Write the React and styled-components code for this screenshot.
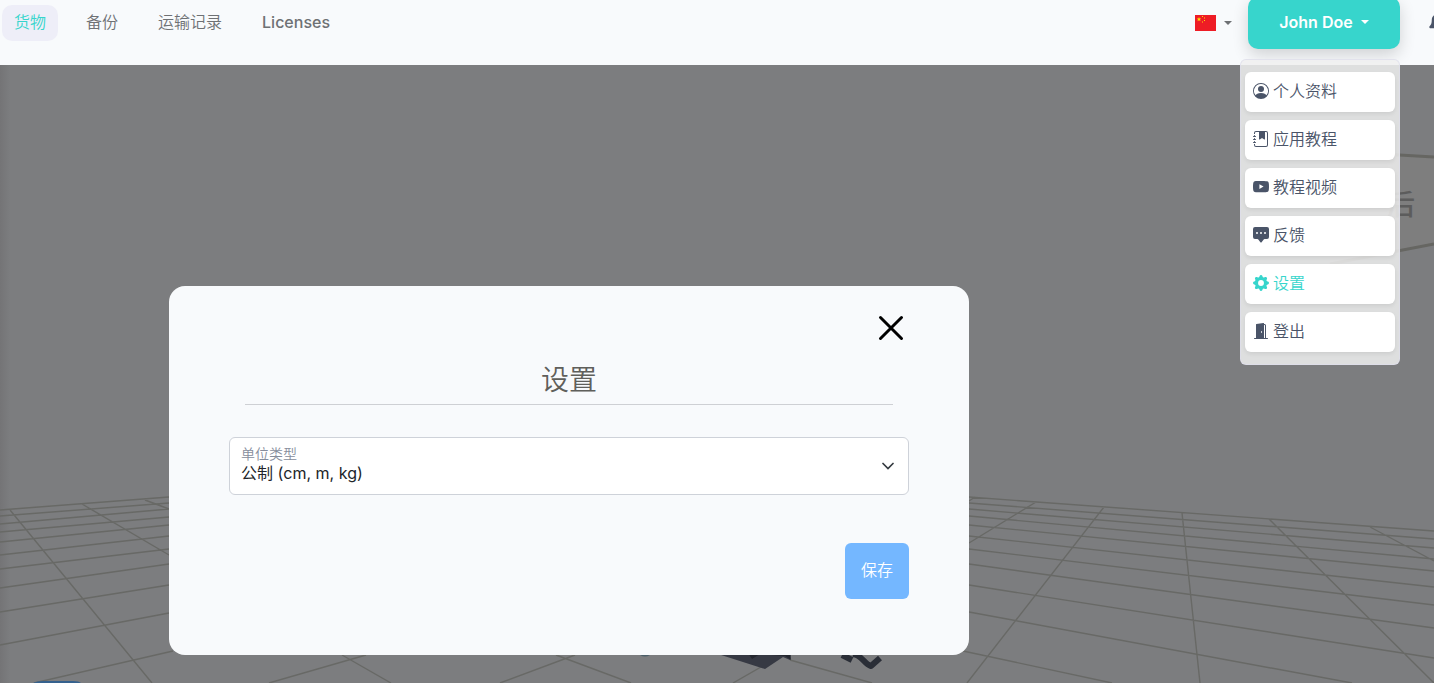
import React from 'react';
import styled, { createGlobalStyle, css } from 'styled-components';
import {
  BsPersonCircle,
  BsJournalBookmarkFill,
  BsYoutube,
  BsChatSquareDotsFill,
  BsGearFill,
  BsDoorOpenFill,
} from 'react-icons/bs';
import { FaBell } from 'react-icons/fa';

const TEAL = '#37d5cc';
const PAGE_BG = '#f8fafc';
const SLATE = '#4a5468';

const GlobalStyle = createGlobalStyle`
  * {
    box-sizing: border-box;
  }

  body {
    margin: 0;
    background: #7c7d7f;
    overflow: hidden;
  }

  body, button, select {
    font-family: Inter, 'Noto Sans CJK SC', sans-serif;
    font-size: 16px;
    font-weight: 350;
    line-height: 24px;
  }
`;

const Page = styled.div`
  position: relative;
  display: flex;
  flex-direction: column;
  min-height: 100vh;
`;

const Header = styled.header`
  display: flex;
  align-items: flex-start;
  justify-content: space-between;
  height: 65px;
  padding-left: 2px;
  background: ${PAGE_BG};
`;

const Nav = styled.nav`
  display: flex;
  gap: 16px;
  padding-top: 5px;
`;

const NavLink = styled.a`
  padding: 5px 12px 7px;
  border-radius: 10px;
  color: #6e7174;
  font-weight: ${(props) => (props.$latin ? 500 : 350)};
  text-decoration: none;

  ${(props) =>
    props.$active &&
    css`
      background: #eeeef8;
      color: ${TEAL};
    `}
`;

const Tools = styled.div`
  display: flex;
  align-items: flex-start;
`;

const LanguageButton = styled.button`
  display: flex;
  align-items: center;
  gap: 8px;
  height: 46px;
  padding: 0 16px;
  border: 0;
  background: none;
  color: #6e7174;
`;

const Caret = styled.span`
  border-top: 4px solid;
  border-right: 4px solid transparent;
  border-left: 4px solid transparent;
`;

const Account = styled.div`
  position: relative;
  margin-right: 28px;
`;

const AccountButton = styled.button`
  display: flex;
  align-items: center;
  justify-content: center;
  gap: 8px;
  width: 152px;
  height: 52px;
  margin-top: -3px;
  padding: 0 0 2px;
  border: 0;
  border-radius: 10px;
  background: ${TEAL};
  box-shadow: 0 6px 16px rgba(0, 0, 0, 0.16);
  color: #fff;
  font-weight: 600;
`;

const Menu = styled.ul`
  position: absolute;
  z-index: 2;
  top: 59px;
  right: 0;
  display: flex;
  flex-direction: column;
  gap: 8px;
  width: 160px;
  margin: 0;
  padding: 12px 4px;
  border: 1px solid rgba(222, 222, 235, 0.8);
  border-radius: 6px;
  background: rgba(240, 240, 240, 0.85);
  list-style: none;
`;

const MenuLink = styled.a`
  display: flex;
  align-items: center;
  gap: 4px;
  height: 40px;
  padding: 0 8px 2px;
  border-radius: 6px;
  background: #fff;
  box-shadow: 0 2px 4px rgba(0, 0, 0, 0.08);
  color: ${(props) => (props.$active ? TEAL : SLATE)};
  text-decoration: none;
`;

const BellButton = styled.button`
  display: flex;
  align-items: center;
  width: 6px;
  height: 44px;
  padding: 0;
  border: 0;
  background: none;
  color: ${SLATE};
  overflow: hidden;

  svg {
    flex: none;
  }
`;

const Scene = styled.main`
  position: relative;
  flex: 1;
  display: flex;
  align-items: flex-end;
  padding: 0 16px 28px 169px;
  background: linear-gradient(90deg, #747476 0, #7c7d7f 10px);
`;

const Backdrop = styled.svg`
  position: absolute;
  inset: 0;
  width: 100%;
  height: 100%;
`;

const Dialog = styled.section`
  position: relative;
  width: 800px;
  max-width: 100%;
  padding: 24px 60px 56px;
  border-radius: 16px;
  background: ${PAGE_BG};
`;

const DialogTop = styled.div`
  display: flex;
  justify-content: flex-end;
`;

const CloseButton = styled.button`
  display: flex;
  padding: 0;
  border: 0;
  background: none;
  color: #000;
`;

const Title = styled.h2`
  margin: 14px 16px 32px;
  padding-bottom: 4px;
  border-bottom: 1px solid #ced0d4;
  color: #5f5f5b;
  font-size: 28px;
  font-weight: 350;
  line-height: 40px;
  text-align: center;
`;

const Field = styled.div`
  position: relative;
`;

const FieldLabel = styled.label`
  position: absolute;
  top: 7px;
  left: 12px;
  color: #868d9c;
  font-size: 14px;
  line-height: 20px;
`;

const Select = styled.select`
  display: block;
  width: 100%;
  height: 58px;
  padding: 19px 40px 5px 11px;
  border: 1px solid #ced2d9;
  border-radius: 6px;
  background: #fff;
  color: #212529;
  font-weight: 400;
  appearance: none;
`;

const Chevron = styled.svg`
  position: absolute;
  top: 23px;
  right: 15px;
  pointer-events: none;
`;

const Actions = styled.div`
  display: flex;
  justify-content: flex-end;
  margin-top: 48px;
`;

const SaveButton = styled.button`
  width: 64px;
  height: 56px;
  padding: 0 0 2px;
  border: 0;
  border-radius: 6px;
  background: #74b7ff;
  color: #fff;
`;

const navItems = [
  { label: '货物', active: true },
  { label: '备份' },
  { label: '运输记录' },
  { label: 'Licenses', latin: true },
];

const menuItems = [
  { label: '个人资料', icon: BsPersonCircle },
  { label: '应用教程', icon: BsJournalBookmarkFill },
  { label: '教程视频', icon: BsYoutube },
  { label: '反馈', icon: BsChatSquareDotsFill },
  { label: '设置', icon: BsGearFill, active: true },
  { label: '登出', icon: BsDoorOpenFill },
];

// floor grid, left part then right part
const FLOOR = `
  M0 445 L169 432 M0 451 L169 438 M0 459 L169 444 M0 467 L169 452 M0 477 L169 460
  M0 490 L169 471 M0 504 L169 484 M0 523 L169 499 M0 547 L169 520 M0 580 L169 548
  M34 618 L173 586 M269 618 L366 590 M500 618 L575 590
  M10 445 L152 618 M82 439 L169 490 M145 435 L169 444 M342 590 L391 618
  M556 590 L631 618 M733 618 L780 591 M790 595 L872 618
  M969 432 L1434 466 M969 438 L1434 474 M969 444 L1434 483 M969 451 L1434 494
  M969 460 L1434 506 M969 471 L1434 522 M969 484 L1434 540 M969 499 L1434 563
  M969 520 L1434 593 M969 547 L1352 618 M963 586 L1112 618
  M969 436 L975 432 M969 478 L1036 437 M967 618 L1104 442
  M1182 448 L1200 618 M1269 454 L1434 618 M1370 462 L1434 496
`;

const Flag = () => (
  <svg width="21" height="16" viewBox="0 0 21 16" aria-hidden="true">
    <path fill="#ee1c25" d="M0 0h21v16H0z" />
    <path
      fill="#ffde00"
      d="M4 2l.6 1.6h1.7L5 4.6l.5 1.7L4 5.3 2.5 6.3 3 4.6 1.7 3.6h1.7zM7 1h1v1H7zM9 2.500h1v1H9zM9 5h1v1H9zM7 6.500h1v1H7z"
    />
  </svg>
);

const SceneDrawing = () => (
  <Backdrop viewBox="0 0 1434 618" preserveAspectRatio="xMidYMax slice" aria-hidden="true">
    <path d={FLOOR} fill="none" stroke="#686966" strokeWidth="1.400" />
    {/* view cube, mostly under the menu */}
    <path d="M1330 86 L1434 92 V179 L1330 199 Z" fill="#7e7e7e" />
    <path d="M1330 86 L1434 92 M1330 199 L1434 179" stroke="#666662" strokeWidth="3" />
    <text x="1387" y="150" fill="#5c5c5c" fontSize="28" fontWeight="500">
      后
    </text>
    <path d="M718 589 L765 604 L783 592 L790 595 L791 588 Z" fill="#363943" />
    <path d="M752 594 L760 589 L785 591 L791 595 L790 588 L748 588 Z" fill="#24272f" />
    <path
      d="M842 590 L852 595 M853 589 C862 590 864 599 871 601 L880 593"
      fill="none"
      stroke="#2a2e37"
      strokeWidth="6"
      strokeLinejoin="round"
    />
    <path d="M640 590 Q645 593 650 590" fill="#4b5e68" />
    <path d="M33 618 Q37 616 43 616 H73 Q79 616 81 618 Z" fill="#35618e" />
  </Backdrop>
);

const App = () => {
  const [unit, setUnit] = React.useState('metric');

  return (
    <Page>
      <GlobalStyle />
      <Header>
        <Nav>
          {navItems.map((item) => (
            <NavLink key={item.label} href="#" $active={item.active} $latin={item.latin}>
              {item.label}
            </NavLink>
          ))}
        </Nav>
        <Tools>
          <LanguageButton aria-label="中文">
            <Flag />
            <Caret />
          </LanguageButton>
          <Account>
            <AccountButton>
              John Doe
              <Caret />
            </AccountButton>
            <Menu>
              {menuItems.map(({ label, icon: Icon, active }) => (
                <li key={label}>
                  <MenuLink href="#" $active={active}>
                    <Icon size={16} />
                    {label}
                  </MenuLink>
                </li>
              ))}
            </Menu>
          </Account>
          <BellButton aria-label="通知">
            <FaBell size={20} />
          </BellButton>
        </Tools>
      </Header>
      <Scene>
        <SceneDrawing />
        <Dialog role="dialog" aria-labelledby="settings-title">
          <DialogTop>
            <CloseButton aria-label="关闭">
              <svg width="36" height="36" viewBox="0 0 36 36">
                <path d="M7.500 7.500l21 21M28.500 7.500l-21 21" stroke="currentColor" strokeWidth="3" strokeLinecap="round" />
              </svg>
            </CloseButton>
          </DialogTop>
          <Title id="settings-title">设置</Title>
          <Field>
            <Select id="unit" value={unit} onChange={(e) => setUnit(e.target.value)}>
              <option value="metric">公制 (cm, m, kg)</option>
            </Select>
            <FieldLabel htmlFor="unit">单位类型</FieldLabel>
            <Chevron width="12" height="12" viewBox="0 0 12 12">
              <path d="M1 3.500l5 5 5-5" fill="none" stroke="#343a40" strokeWidth="1.700" strokeLinecap="round" />
            </Chevron>
          </Field>
          <Actions>
            <SaveButton>保存</SaveButton>
          </Actions>
        </Dialog>
      </Scene>
    </Page>
  );
};

export default App;
